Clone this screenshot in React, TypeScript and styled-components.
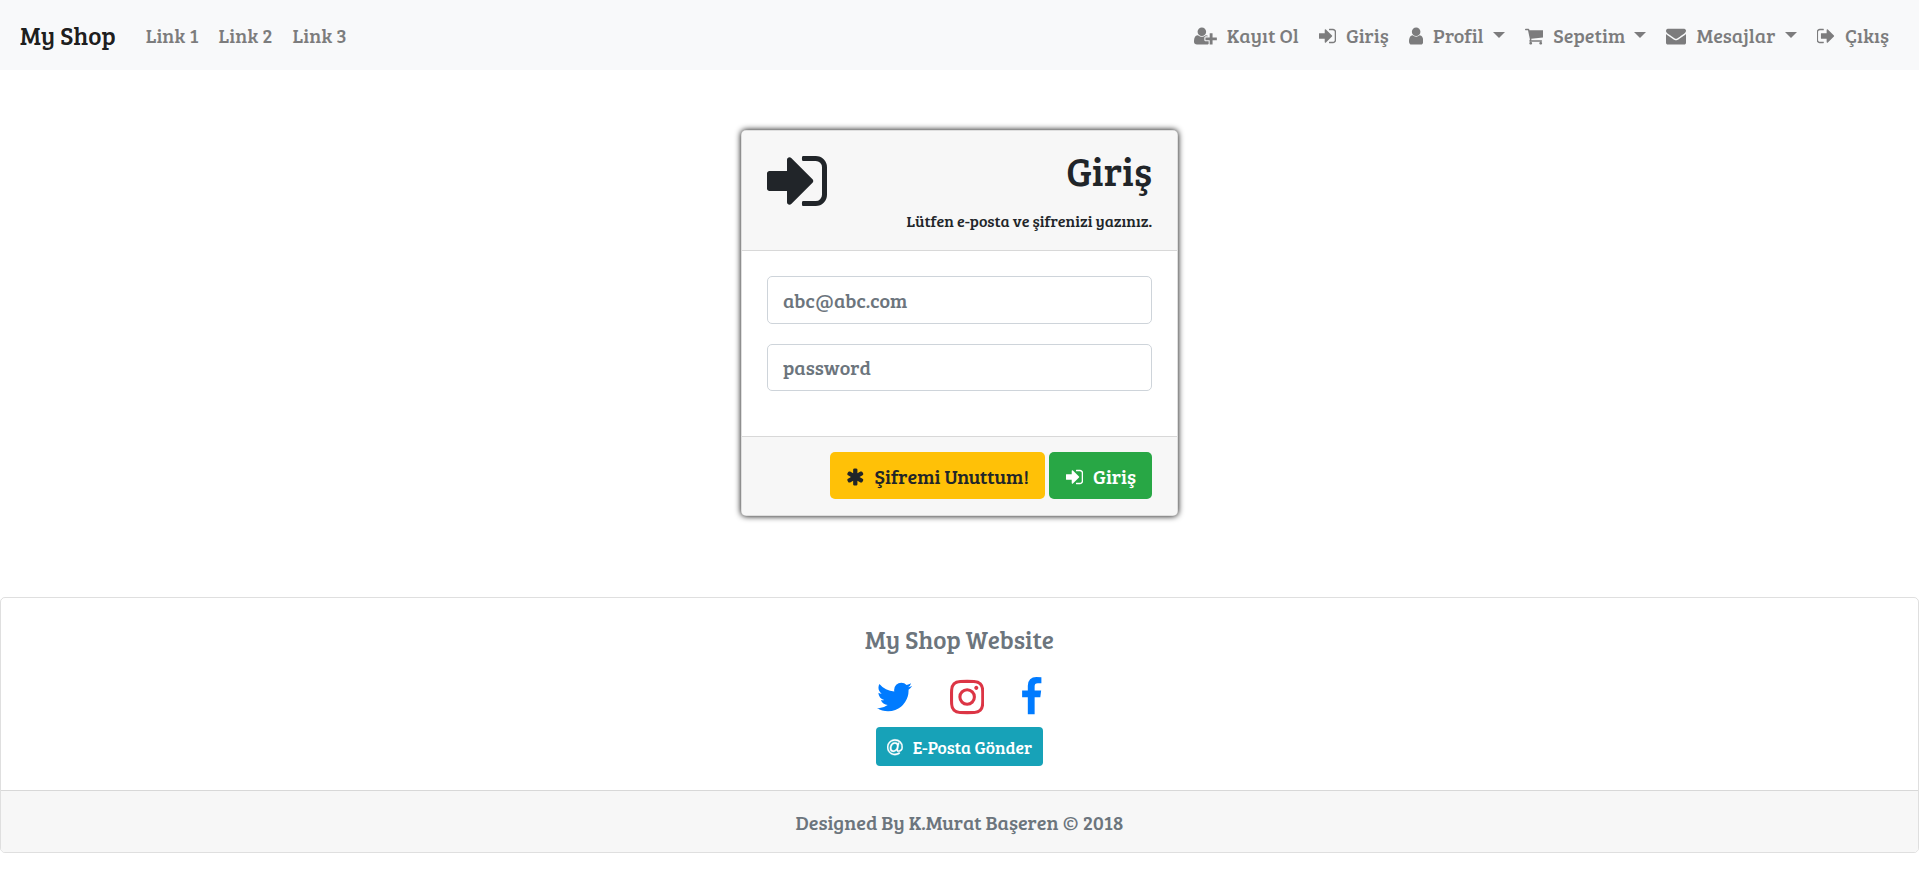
import React from "react";
import styled, { createGlobalStyle, css } from "styled-components";

const GlobalStyle = createGlobalStyle`
  * { box-sizing: border-box; }
  body {
    margin: 0;
    background: #fff;
    color: #212529;
    font-family: "Bree Serif", "DejaVu Serif Condensed", "DejaVu Serif", serif;
    font-size: 20px;
    line-height: 1.5;
  }
`;

/* Icon outlines on a 1792-unit grid; box is [left, width] of the glyph. */
type Glyph = { box: [number, number]; d: string; flip?: boolean; stroke?: number };

const glyphs: Record<string, Glyph> = {
  userPlus: {
    box: [0, 2048],
    flip: true,
    d: "M704 640q-159 0 -271.5 112.5t-112.5 271.5t112.5 271.5t271.5 112.5t271.5 -112.5t112.5 -271.5t-112.5 -271.5t-271.5 -112.5zM1664 512h352q13 0 22.5 -9.5t9.5 -22.5v-192q0 -13 -9.5 -22.5t-22.5 -9.5h-352v-352q0 -13 -9.5 -22.5t-22.5 -9.5h-192q-13 0 -22.5 9.5t-9.5 22.5v352h-352q-13 0 -22.5 9.5t-9.5 22.5v192q0 13 9.5 22.5t22.5 9.5h352v352q0 13 9.5 22.5t22.5 9.5h192q13 0 22.5 -9.5t9.5 -22.5v-352zM928 288q0 -52 38 -90t90 -38h256v-238q-68 -50 -171 -50h-874q-121 0 -194 69t-73 190q0 53 3.5 103.5t14 109t26.5 108.5t43 97.5t62 81t85.5 53.5t111.5 20q19 0 39 -17q79 -61 154.5 -91.5t164.5 -30.5t164.5 30.5t154.5 91.5q20 17 39 17q132 0 217 -96h-223q-52 0 -90 -38t-38 -90v-192z",
  },
  signIn: {
    box: [128, 1536],
    d: "M1312 896q0 26-19 45l-544 544q-19 19-45 19t-45-19-19-45v-288h-448q-26 0-45-19t-19-45v-384q0-26 19-45t45-19h448v-288q0-26 19-45t45-19 45 19l544 544q19 19 19 45zm352-352v704q0 119-84.5 203.5t-203.5 84.5h-320q-13 0-22.5-9.5t-9.5-22.5q0-4-1-20t-.5-26.5 3-23.5 10-19.5 20.5-6.5h320q66 0 113-47t47-113v-704q0-66-47-113t-113-47h-312l-11.5-1-11.5-3-8-5.5-7-9-2-13.5q0-4-1-20t-.5-26.5 3-23.5 10-19.5 20.5-6.5h320q119 0 203.5 84.5t84.5 203.5z",
  },
  signOut: {
    box: [96, 1650],
    d: "M704 1440q0 4 1 20t.5 26.5-3 23.5-10 19.5-20.5 6.5h-320q-119 0-203.5-84.5t-84.5-203.5v-704q0-119 84.5-203.5t203.5-84.5h320q13 0 22.5 9.5t9.5 22.5q0 4 1 20t.5 26.5-3 23.5-10 19.5-20.5 6.5h-320q-66 0-113 47t-47 113v704q0 66 47 113t113 47h312l11.5 1 11.5 3 8 5.5 7 9 2 13.5zm928-544q0 26-19 45l-544 544q-19 19-45 19t-45-19-19-45v-288h-448q-26 0-45-19t-19-45v-384q0-26 19-45t45-19h448v-288q0-26 19-45t45-19 45 19l544 544q19 19 19 45z",
  },
  user: {
    box: [256, 1280],
    d: "M1536 1399q0 109-62.5 187t-150.5 78h-854q-88 0-150.5-78t-62.5-187q0-85 8.5-160.5t31.5-152 58.5-131 94-89 134.5-34.5q131 128 313 128t313-128q76 0 134.5 34.5t94 89 58.5 131 31.5 152 8.5 160.5zm-256-887q0 159-112.5 271.5t-271.5 112.5-271.5-112.5-112.5-271.5 112.5-271.5 271.5-112.5 271.5 112.5 112.5 271.5z",
  },
  cart: {
    box: [64, 1664],
    d: "M704 1536q0 52-38 90t-90 38-90-38-38-90 38-90 90-38 90 38 38 90zm896 0q0 52-38 90t-90 38-90-38-38-90 38-90 90-38 90 38 38 90zm128-1088v512q0 24-16.5 42.5t-40.5 21.5l-1044 122q13 60 13 70 0 16-24 64h920q26 0 45 19t19 45-19 45-45 19h-1024q-26 0-45-19t-19-45q0-11 8-31.5t16-36 21.5-40 15.5-29.5l-177-823h-204q-26 0-45-19t-19-45 19-45 45-19h256q16 0 28.5 6.5t19.5 15.5 13 24.5 8 26 5.5 29.5 4.5 26h1201q26 0 45 19t19 45z",
  },
  envelope: {
    box: [0, 1792],
    d: "M1792 710v794q0 66-47 113t-113 47h-1472q-66 0-113-47t-47-113v-794q44 49 101 87 362 246 497 345 57 42 92.5 65.5t94.5 48 110 24.5h2q51 0 110-24.5t94.5-48 92.5-65.5q170-123 498-345 57-39 100-87zm0-294q0 79-49 151t-122 123q-376 261-468 325-10 7-42.5 31t-54 38.5-52 32.5-57.5 27-50 9h-2q-23 0-50-9t-57.5-27-52-32.5-54-38.5-42.5-31q-91-64-262-182.5t-205-142.5q-62-42-117-115.5t-55-136.5q0-78 41.5-130t118.5-52h1472q65 0 112.5 47t47.5 113z",
  },
  asterisk: {
    box: [0, 1664],
    flip: true,
    d: "M1482 486q46 -26 59.5 -77.5t-12.5 -97.5l-64 -110q-26 -46 -77.5 -59.5t-97.5 12.5l-266 153v-307q0 -52 -38 -90t-90 -38h-128q-52 0 -90 38t-38 90v307l-266 -153q-46 -26 -97.5 -12.5t-77.5 59.5l-64 110q-26 46 -12.5 97.5t59.5 77.5l266 154l-266 154q-46 26 -59.5 77.5t12.5 97.5l64 110q26 46 77.5 59.5t97.5 -12.5l266 -153v307q0 52 38 90t90 38h128q52 0 90 -38t38 -90v-307l266 153q46 26 97.5 12.5t77.5 -59.5l64 -110q26 -46 12.5 -97.5t-59.5 -77.5l-266 -154z",
  },
  at: {
    box: [0, 1536],
    flip: true,
    stroke: 36,
    d: "M972 761q0 108 -53.5 169t-147.5 61q-63 0 -124 -30.5t-110 -84.5t-79.5 -137t-30.5 -180q0 -112 53.5 -173t150.5 -61q96 0 176 66.5t122.5 166t42.5 203.5zM1536 640q0 -111 -37 -197t-98.5 -135t-131.5 -74.5t-145 -27.5q-6 0 -15.5 -0.5t-16.5 -0.5q-95 0 -142 53q-28 33 -33 83q-52 -66 -131.5 -110t-173.5 -44q-161 0 -249.5 95.5t-88.5 269.5q0 157 66 290t179 210.5t246 77.5q87 0 155 -35.5t106 -99.5l2 19l11 56q1 6 5.5 12t9.5 6h118q5 0 13 -11q5 -5 3 -16l-120 -614q-5 -24 -5 -48q0 -39 12.5 -52t44.5 -13q28 1 57 5.5t73 24t77 50t57 89.5t24 137q0 292 -174 466t-466 174q-130 0 -248.5 -51t-204 -136.5t-136.5 -204t-51 -248.5t51 -248.5t136.5 -204t204 -136.5t248.5 -51q228 0 405 144q11 9 24 8t21 -12l41 -49q8 -12 7 -24q-2 -13 -12 -22q-102 -83 -227.5 -128t-258.5 -45q-156 0 -298 61t-245 164t-164 245t-61 298t61 298t164 245t245 164t298 61q344 0 556 -212t212 -556z",
  },
  twitter: {
    box: [64, 1664],
    d: "M1684 408q-67 98-162 167 1 14 1 42 0 130-38 259.5t-115.5 248.5-184.5 210.5-258 146-323 54.5q-271 0-496-145 35 4 78 4 225 0 401-138-105-2-188-64.5t-114-159.5q33 5 61 5 43 0 85-11-112-23-185.5-111.5t-73.5-205.5v-4q68 38 146 41-66-44-105-115t-39-154q0-88 44-163 121 149 294.5 238.5t371.5 99.5q-8-38-8-74 0-134 94.5-228.5t228.5-94.5q140 0 236 102 109-21 205-78-37 115-142 178 93-10 186-50z",
  },
  instagram: {
    box: [128, 1536],
    d: "M1152 896q0-106-75-181t-181-75-181 75-75 181 75 181 181 75 181-75 75-181zm138 0q0 164-115 279t-279 115-279-115-115-279 115-279 279-115 279 115 115 279zm108-410q0 38-27 65t-65 27-65-27-27-65 27-65 65-27 65 27 27 65zm-502-220q-7 0-76.5-.5t-105.5 0-96.5 3-103 10-71.5 18.5q-50 20-88 58t-58 88q-11 29-18.5 71.5t-10 103-3 96.5 0 105.5.5 76.5-.5 76.5 0 105.5 3 96.5 10 103 18.5 71.5q20 50 58 88t88 58q29 11 71.5 18.5t103 10 96.5 3 105.5 0 76.5-.5 76.5.5 105.5 0 96.5-3 103-10 71.5-18.5q50-20 88-58t58-88q11-29 18.5-71.5t10-103 3-96.5 0-105.5-.5-76.5.5-76.5 0-105.5-3-96.5-10-103-18.5-71.5q-20-50-58-88t-88-58q-29-11-71.5-18.5t-103-10-96.5-3-105.5 0-76.5.5zm768 630q0 229-5 317-10 208-124 322t-322 124q-88 5-317 5t-317-5q-208-10-322-124t-124-322q-5-88-5-317t5-317q10-208 124-322t322-124q88-5 317-5t317 5q208 10 322 124t124 322q5 88 5 317z",
  },
  facebook: {
    box: [384, 1024],
    d: "M1343 12v264h-157q-86 0-116 36t-30 108v189h293l-39 296h-254v759h-306v-759h-255v-296h255v-218q0-186 104-288.5t277-102.5q147 0 228 12z",
  },
};

const IconSvg = styled.svg<{ $drop?: number }>`
  display: block;
  flex: none;
  fill: currentColor;
  stroke: currentColor;
  margin-top: ${(p) => p.$drop ?? 0}px;
`;

function Icon({ name, size = 20, drop }: { name: string; size?: number; drop?: number }) {
  const { box, d, flip, stroke = 0 } = glyphs[name];
  return (
    <IconSvg
      $drop={drop}
      width={(box[1] * size) / 1792}
      height={size}
      viewBox={`${box[0]} 0 ${box[1]} 1792`}
      aria-hidden
    >
      <path d={d} strokeWidth={stroke} transform={flip ? "translate(0 1536) scale(1 -1)" : undefined} />
    </IconSvg>
  );
}

const Navbar = styled.nav`
  display: flex;
  align-items: center;
  justify-content: space-between;
  height: 70px;
  padding: 0 20px;
  background: #f8f9fa;
`;

const NavGroup = styled.div`
  display: flex;
  align-items: center;
`;

const Brand = styled.a`
  margin-right: 20px;
  padding-top: 2px;
  color: rgba(0, 0, 0, 0.9);
  font-size: 25px;
  white-space: nowrap;
`;

const NavLink = styled.a`
  display: flex;
  align-items: center;
  padding: 0 10px;
  color: rgba(0, 0, 0, 0.5);
`;

const Label = styled.span`
  white-space: nowrap;

  svg + & {
    margin-left: 10px;
  }
`;

const Caret = styled.span`
  margin-left: 9.2px;
  border-top: 6px solid;
  border-right: 6px solid transparent;
  border-left: 6px solid transparent;
`;

const Card = styled.form`
  display: flex;
  flex-direction: column;
  width: 437px;
  height: 386px;
  margin: 60px auto 81px;
  border: 1px solid rgba(0, 0, 0, 0.125);
  border-radius: 5px;
  background: #fff;
  box-shadow: 0 0 6px 0 #000;
  overflow: hidden;
`;

const CardHeader = styled.header`
  display: flex;
  justify-content: space-between;
  flex: none;
  height: 120px;
  padding: 15px 25px;
  border-bottom: 1px solid rgba(0, 0, 0, 0.125);
  background: #f7f7f7;
`;

const Heading = styled.div`
  text-align: right;
  white-space: nowrap;
`;

const Title = styled.h1`
  margin: 0 0 10px;
  font-size: 40px;
  font-weight: 400;
  line-height: 1.2;
`;

const Subtitle = styled.p`
  margin: 0;
  font-size: 16px;
  line-height: 34px;
`;

const CardBody = styled.div`
  display: flex;
  flex: 1;
  flex-direction: column;
  gap: 20px;
  padding: 25px;
`;

const Input = styled.input`
  width: 100%;
  height: 47.5px;
  padding: 7.5px 15px;
  border: 1px solid #ced4da;
  border-radius: 5px;
  background: #fff;
  font: inherit;
  outline: none;

  &::placeholder {
    color: #6c757d;
    opacity: 1;
  }
`;

const CardFooter = styled.footer`
  display: flex;
  justify-content: flex-end;
  gap: 4px;
  flex: none;
  height: 79px;
  padding: 15px 25px;
  border-top: 1px solid rgba(0, 0, 0, 0.125);
  background: #f7f7f7;
`;

const tones = {
  warning: css`
    background: #ffc107;
    color: #212529;
  `,
  success: css`
    padding-left: 17px;
    background: #28a745;
    color: #fff;
  `,
  info: css`
    height: 39px;
    padding: 1px 11px 0;
    border-radius: 4px;
    background: #17a2b8;
    color: #fff;
    font-size: 17.5px;
  `,
};

const Button = styled.button<{ $tone: keyof typeof tones }>`
  display: flex;
  align-items: center;
  height: 47px;
  padding: 1px 16px 0;
  border: 0;
  border-radius: 5px;
  font: inherit;
  ${(p) => tones[p.$tone]}
`;

const SiteFooter = styled.footer`
  display: flex;
  flex-direction: column;
  height: 256px;
  border: 1px solid rgba(0, 0, 0, 0.125);
  border-radius: 5px;
  color: #6c757d;
  text-align: center;
  overflow: hidden;
`;

const FooterBody = styled.div`
  display: flex;
  flex: 1;
  flex-direction: column;
  align-items: center;
  padding-top: 25px;
`;

const SiteName = styled.h2`
  height: 30px;
  margin: 0 0 24px;
  font-size: 25px;
  font-weight: 400;
  line-height: 32px;
`;

const SocialRow = styled.div`
  display: flex;
  gap: 36px;
  margin-bottom: 10px;
`;

const SocialLink = styled.a<{ $color: string }>`
  color: ${(p) => p.$color};
`;

const Credit = styled.div`
  height: 62px;
  padding-top: 16px;
  border-top: 1px solid rgba(0, 0, 0, 0.125);
  background: #f7f7f7;
`;

const siteLinks = ["Link 1", "Link 2", "Link 3"];

const accountLinks = [
  { icon: "userPlus", text: "Kayıt Ol" },
  { icon: "signIn", text: "Giriş" },
  { icon: "user", text: "Profil", menu: true },
  { icon: "cart", text: "Sepetim", menu: true },
  { icon: "envelope", text: "Mesajlar", menu: true },
  { icon: "signOut", text: "Çıkış" },
];

export default function App() {
  return (
    <>
      <GlobalStyle />
      <Navbar>
        <NavGroup>
          <Brand>My Shop</Brand>
          {siteLinks.map((text) => (
            <NavLink key={text}>
              <Label>{text}</Label>
            </NavLink>
          ))}
        </NavGroup>
        <NavGroup>
          {accountLinks.map((link) => (
            <NavLink key={link.text}>
              <Icon name={link.icon} drop={2} />
              <Label>{link.text}</Label>
              {link.menu && <Caret />}
            </NavLink>
          ))}
        </NavGroup>
      </Navbar>

      <Card>
        <CardHeader>
          <Icon name="signIn" size={70} />
          <Heading>
            <Title>Giriş</Title>
            <Subtitle>Lütfen e-posta ve şifrenizi yazınız.</Subtitle>
          </Heading>
        </CardHeader>
        <CardBody>
          <Input type="email" placeholder="abc@abc.com" />
          <Input type="password" placeholder="password" />
        </CardBody>
        <CardFooter>
          <Button type="button" $tone="warning">
            <Icon name="asterisk" drop={2} />
            <Label>Şifremi Unuttum!</Label>
          </Button>
          <Button type="button" $tone="success">
            <Icon name="signIn" drop={2} />
            <Label>Giriş</Label>
          </Button>
        </CardFooter>
      </Card>

      <SiteFooter>
        <FooterBody>
          <SiteName>My Shop Website</SiteName>
          <SocialRow>
            <SocialLink $color="#007bff"><Icon name="twitter" size={40} /></SocialLink>
            <SocialLink $color="#dc3545"><Icon name="instagram" size={40} /></SocialLink>
            <SocialLink $color="#007bff"><Icon name="facebook" size={40} /></SocialLink>
          </SocialRow>
          <Button type="button" $tone="info">
            <Icon name="at" size={18.5} />
            <Label>E-Posta Gönder</Label>
          </Button>
        </FooterBody>
        <Credit>Designed By K.Murat Başeren © 2018</Credit>
      </SiteFooter>
    </>
  );
}
